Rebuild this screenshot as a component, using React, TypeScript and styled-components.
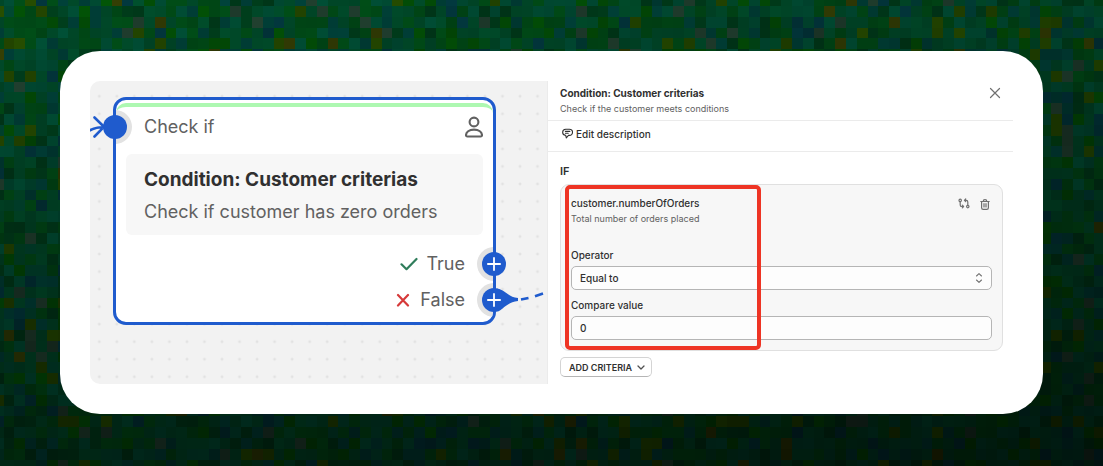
import React from "react";
import styled, { createGlobalStyle } from "styled-components";

const GlobalStyle = createGlobalStyle`
  *, *::before, *::after { box-sizing: border-box; }
  body { margin: 0; background: #02200f; }
  body, button, input, select { font-family: Inter, "Liberation Sans", sans-serif; }
  h2, h3, p { margin: 0; }
`;

const blue = "#1f5bcd";

/* ---------- mosaic backdrop ---------- */

const TILE = 10.8;
const COLS = 104;
const ROWS = 44;

const palette: Array<[number, number, number, number]> = [
  [0, 72, 40, 24],
  [0, 72, 22, 20],
  [0, 74, 50, 14],
  [0, 62, 54, 10],
  [0, 58, 26, 10],
  [2, 76, 6, 9],
  [36, 72, 0, 6],
  [50, 60, 4, 2],
  [32, 62, 46, 4],
  [2, 54, 60, 4],
];

function makeRandom(seed: number) {
  let s = seed;
  return () => {
    s = (s * 1664525 + 1013904223) % 4294967296;
    return s / 4294967296;
  };
}

function buildTiles() {
  const random = makeRandom(2291);
  const total = palette.reduce((sum, p) => sum + p[3], 0);
  const tiles: Array<{ x: number; y: number; fill: string }> = [];
  for (let row = 0; row < ROWS; row++) {
    for (let col = 0; col < COLS; col++) {
      let pick = random() * total;
      let tone = palette[0];
      for (const p of palette) {
        pick -= p[3];
        if (pick <= 0) {
          tone = p;
          break;
        }
      }
      const fade = 1.06 - 0.56 * (row / ROWS) - 0.2 * (col / COLS);
      const light = fade * (0.92 + random() * 0.16);
      const [r, g, b] = [tone[0], tone[1], tone[2]].map((c) => Math.round(c * light));
      tiles.push({
        x: col * TILE - 7.3,
        y: row * TILE - 4.8,
        fill: `rgb(${r},${g},${b})`,
      });
    }
  }
  return tiles;
}

const tiles = buildTiles();

const Page = styled.main`
  position: relative;
  min-height: 100vh;
  padding: 51px 60px 52px;
  overflow: hidden;
`;

const Backdrop = styled.svg`
  position: absolute;
  inset: 0;
  width: 100%;
  height: 100%;
`;

const Card = styled.section`
  position: relative;
  display: grid;
  grid-template-columns: 457fr 466fr;
  padding: 30px;
  border-radius: 40px;
  background: #fff;
`;

/* ---------- workflow canvas ---------- */

const Canvas = styled.div`
  position: relative;
  padding: 16px 51px 59px 23px;
  overflow: hidden;
  border-radius: 10px 0 0 10px;
  background: #f2f2f2;
`;

const Dots = styled.svg`
  position: absolute;
  inset: 0;
  width: 100%;
  height: 100%;
`;

const Node = styled.article`
  position: relative;
  display: flex;
  flex-direction: column;
  height: 100%;
  padding: 0 10px;
  border: 3px solid ${blue};
  border-radius: 13px;
  background: #fff;
`;

const NodeInside = styled.div`
  position: absolute;
  inset: 0;
  overflow: hidden;
  border-radius: 10px;
`;

const Accent = styled.div`
  position: absolute;
  inset: 3px 0 auto;
  height: 20px;
  border-top: 4px solid #adf8b1;
  border-radius: 10px 10px 0 0;
`;

const Halo = styled.span<{ $side: "left" | "right"; $top: number }>`
  position: absolute;
  top: ${(p) => p.$top - 17}px;
  ${(p) => p.$side}: -18px;
  width: 34px;
  height: 34px;
  border-radius: 50%;
  background: #e2e2e2;
`;

const PortButton = styled.button<{ $side: "left" | "right"; $top: number }>`
  position: absolute;
  top: ${(p) => p.$top - 12}px;
  ${(p) => p.$side}: -13px;
  display: grid;
  place-items: center;
  width: 24px;
  height: 24px;
  padding: 0;
  border: 0;
  border-radius: 50%;
  background: ${blue};
`;

const Incoming = styled.svg`
  position: absolute;
  top: 16px;
  right: 100%;
  width: 24px;
  height: 24px;
  overflow: visible;
`;

const Outgoing = styled.svg`
  position: absolute;
  top: 182px;
  left: 100%;
  width: 56px;
  height: 32px;
`;

const NodeHeader = styled.header`
  position: relative;
  display: flex;
  align-items: center;
  justify-content: space-between;
  height: 54px;
  padding: 0 0 0 18px;
  color: #616161;
  font-size: 18px;
  line-height: 24px;
`;

const NodeBody = styled.div`
  position: relative;
  padding: 14px 18px 11px;
  border-radius: 6px;
  background: #f7f7f7;
  color: #616161;
  font-size: 18px;
  line-height: 24px;
`;

const NodeTitle = styled.h2`
  margin-bottom: 8px;
  color: #303030;
  font-size: 19px;
  font-weight: 700;
  line-height: 24px;
`;

const Branches = styled.div`
  position: relative;
  display: flex;
  flex-direction: column;
  align-items: flex-end;
  gap: 12px;
  padding: 17px 18px 10px;
`;

const Branch = styled.div`
  display: flex;
  align-items: center;
  gap: 8px;
  color: #616161;
  font-size: 18px;
  line-height: 24px;
`;

/* ---------- settings panel ---------- */

const Panel = styled.div`
  display: flex;
  flex-direction: column;
  border-left: 1px solid #ebebeb;
  color: #303030;
  font-size: 10px;
  line-height: 14px;
`;

const PanelHeader = styled.header`
  display: flex;
  justify-content: space-between;
  align-items: flex-start;
  height: 40px;
  padding: 5px 11px 0 12px;
  border-bottom: 1px solid #ebebeb;
`;

const PanelTitle = styled.h2`
  margin-bottom: 2px;
  font-size: 10px;
  font-weight: 700;
  line-height: 14px;
`;

const Hint = styled.p`
  color: #616161;
  font-size: 9px;
  line-height: 14px;
`;

const IconButton = styled.button`
  display: grid;
  place-items: center;
  padding: 0;
  border: 0;
  background: none;
  color: #707070;
`;

const EditRow = styled.div`
  display: flex;
  height: 31px;
  padding: 0 14px 5px;
  border-bottom: 1px solid #ebebeb;
`;

const EditButton = styled.button`
  display: flex;
  align-items: center;
  gap: 3px;
  padding: 0;
  border: 0;
  background: none;
  color: #303030;
  font-size: 10px;
  font-weight: 450;
`;

const Criteria = styled.form`
  padding: 12px 10px 7px 12px;
`;

const GroupLabel = styled.h3`
  margin-bottom: 6px;
  font-size: 11px;
  font-weight: 600;
  line-height: 14px;
`;

const CriteriaBox = styled.div`
  position: relative;
  padding: 11px 10px 10px;
  margin-bottom: 6px;
  border: 1px solid #e0e0e0;
  border-radius: 9px;
  background: #f7f7f7;
`;

const Highlight = styled.div`
  position: absolute;
  top: 0;
  left: 4px;
  width: 196px;
  height: 100%;
  border: 4px solid #ee3424;
  border-radius: 5px;
  pointer-events: none;
`;

const BoxHeader = styled.div`
  display: flex;
  justify-content: space-between;
  align-items: flex-start;
  height: 52px;
`;

const Variable = styled.h3`
  margin-bottom: 2px;
  font-size: 10px;
  font-weight: 450;
  line-height: 14px;
`;

const Actions = styled.div`
  display: flex;
  gap: 9px;
  padding: 1px 1px 0 0;
`;

const Field = styled.div`
  position: relative;
  display: flex;
  flex-direction: column;
  gap: 4px;
  & + & { margin-top: 8px; }
`;

const Label = styled.label`
  font-weight: 450;
  line-height: 14px;
`;

const controlStyle = `
  width: 100%;
  height: 24px;
  padding: 0 8px;
  border: 1px solid #b5b5b5;
  border-radius: 5px;
  background: #fdfdfd;
  color: #303030;
  font-size: 10px;
  font-weight: 450;
  appearance: none;
`;

const Select = styled.select`${controlStyle}`;
const Input = styled.input`${controlStyle}`;

const SelectIcon = styled.svg`
  position: absolute;
  right: 9px;
  bottom: 6px;
  width: 8px;
  height: 12px;
  pointer-events: none;
`;

const AddButton = styled.button`
  display: flex;
  align-items: center;
  gap: 5px;
  height: 20px;
  padding: 0 6px 0 8px;
  border: 1px solid #d4d4d4;
  border-bottom-color: #b5b5b5;
  border-radius: 5px;
  background: #fff;
  color: #303030;
  font-size: 9px;
  font-weight: 600;
`;

const Plus = () => (
  <svg width="14" height="14" viewBox="0 0 14 14" fill="none" stroke="#fff" strokeWidth="1.8" strokeLinecap="round" aria-hidden="true">
    <path d="M7 .9v12.2M.9 7h12.2" />
  </svg>
);

export default function App() {
  return (
    <>
      <GlobalStyle />
      <Page>
        <Backdrop viewBox="0 0 1103 466" preserveAspectRatio="xMidYMid slice" shapeRendering="crispEdges" aria-hidden="true">
          {tiles.map((t, i) => (
            <rect key={i} x={t.x} y={t.y} width={TILE} height={TILE} fill={t.fill} />
          ))}
        </Backdrop>

        <Card>
          <Canvas>
            <Dots aria-hidden="true">
              <defs>
                <pattern id="dots" width="17.53" height="17.53" patternUnits="userSpaceOnUse" x="0.5" y="6.5">
                  <path d="M7.3 8.8h3M8.8 7.3v3" stroke="#dedede" strokeWidth="1" />
                </pattern>
              </defs>
              <rect width="100%" height="100%" fill="url(#dots)" />
            </Dots>

            <Node>
              <NodeInside aria-hidden="true">
                <Accent />
                <Halo $side="left" $top={27} />
                <Halo $side="right" $top={164} />
                <Halo $side="right" $top={200} />
              </NodeInside>

              <NodeHeader>
                Check if
                <svg width="18" height="22" viewBox="0 0 18 22" fill="none" stroke="#616161" strokeWidth="2.1" strokeLinejoin="round" aria-label="Customer" role="img">
                  <circle cx="9" cy="6" r="4.4" />
                  <path d="M1 19.2C1 16.2 4 13.6 9 13.6s8 2.6 8 5.6c0 .9-.5 1.3-1.3 1.3H2.3C1.5 20.5 1 20.1 1 19.2z" />
                </svg>
              </NodeHeader>

              <NodeBody>
                <NodeTitle>Condition: Customer criterias</NodeTitle>
                <p>Check if customer has zero orders</p>
              </NodeBody>

              <Branches>
                <Branch>
                  <svg width="18" height="14" viewBox="0 0 18 14" fill="none" stroke="#2f7d5b" strokeWidth="2.2" strokeLinecap="round" strokeLinejoin="round" aria-hidden="true">
                    <path d="M1.5 7.3l5 4.9L16.5 2" />
                  </svg>
                  True
                </Branch>
                <Branch>
                  <svg width="16" height="14" viewBox="0 0 16 14" fill="none" stroke="#d63a3a" strokeWidth="2.2" strokeLinecap="round" aria-hidden="true">
                    <path d="M2 2l10 10.5M12 2L2 12.5" />
                  </svg>
                  False
                </Branch>
              </Branches>

              <Incoming viewBox="0 0 24 24" fill="none" stroke={blue} strokeWidth="2.6" strokeLinecap="round" aria-hidden="true">
                <path d="M-4 15.5C1 12 6 11 14 11M2.5 1.5L12 10.8 2.5 20.5" />
              </Incoming>
              <Outgoing viewBox="0 0 56 32" aria-hidden="true">
                <path d="M4 6.5C13 8 15 15.5 25 16v3C15 20 12 26 4 29z" fill={blue} />
                <path d="M28 17.5L35.5 16M42 14.2L50 11.5" fill="none" stroke={blue} strokeWidth="2.6" />
              </Outgoing>

              <PortButton $side="left" $top={27} type="button" aria-label="Incoming connection" />
              <PortButton $side="right" $top={164} type="button" aria-label="Add step when true"><Plus /></PortButton>
              <PortButton $side="right" $top={200} type="button" aria-label="Add step when false"><Plus /></PortButton>
            </Node>
          </Canvas>

          <Panel>
            <PanelHeader>
              <div>
                <PanelTitle>Condition: Customer criterias</PanelTitle>
                <Hint>Check if the customer meets conditions</Hint>
              </div>
              <IconButton type="button" aria-label="Close">
                <svg width="14" height="14" viewBox="0 0 14 14" fill="none" stroke="currentColor" strokeWidth="1.2" strokeLinecap="round">
                  <path d="M2.5 2.5l9 9M11.5 2.5l-9 9" />
                </svg>
              </IconButton>
            </PanelHeader>

            <EditRow>
              <EditButton type="button">
                <svg width="11" height="11" viewBox="0 0 11 11" fill="none" stroke="#303030" strokeWidth="1.1" strokeLinecap="round" strokeLinejoin="round" aria-hidden="true">
                  <path d="M3.8 1.2h3.6a2.9 2.9 0 0 1 0 6.2H6.5L4.3 9.8 3.7 7.4a3 3 0 0 1 .1-6.2zM3.4 3.4h4.4M3.4 5.3h2.8" />
                </svg>
                Edit description
              </EditButton>
            </EditRow>

            <Criteria onSubmit={(e) => e.preventDefault()}>
              <GroupLabel>IF</GroupLabel>
              <CriteriaBox>
                <BoxHeader>
                  <div>
                    <Variable>customer.numberOfOrders</Variable>
                    <Hint>Total number of orders placed</Hint>
                  </div>
                  <Actions>
                    <IconButton type="button" aria-label="Replace variable">
                      <svg width="12" height="12" viewBox="0 0 12 12" fill="none" stroke="currentColor" strokeWidth="1.2" strokeLinecap="round" strokeLinejoin="round">
                        <circle cx="2.2" cy="2.4" r="1.2" />
                        <circle cx="9.8" cy="8.6" r="1.2" />
                        <path d="M2.2 3.7v3.2c0 1 .6 1.6 1.6 1.6h1.5M4.3 7.2l1.3 1.3-1.3 1.4M9.8 7.3V4c0-1-.6-1.6-1.6-1.6H6.6M7.7 1L6.4 2.4l1.3 1.3" />
                      </svg>
                    </IconButton>
                    <IconButton type="button" aria-label="Delete criteria">
                      <svg width="12" height="14" viewBox="0 0 12 14" fill="none" stroke="currentColor" strokeWidth="1.2" strokeLinecap="round" strokeLinejoin="round">
                        <path d="M1.8 4.5h8.400M4.200 4.500c0-2.400 3.600-2.400 3.600 0M2.600 4.500v6.300c0 1 .6 1.600 1.600 1.600h3.600c1 0 1.600-.6 1.600-1.600V4.500M5 6.700v3.300M7 6.700v3.300" />
                      </svg>
                    </IconButton>
                  </Actions>
                </BoxHeader>

                <Field>
                  <Label htmlFor="operator">Operator</Label>
                  <Select id="operator" defaultValue="eq">
                    <option value="eq">Equal to</option>
                    <option value="ne">Not equal to</option>
                  </Select>
                  <SelectIcon viewBox="0 0 8 12" fill="none" stroke="#707070" strokeWidth="1.1" strokeLinecap="round" strokeLinejoin="round" aria-hidden="true">
                    <path d="M1.5 4L4 1.7 6.5 4M1.5 8L4 10.3 6.5 8" />
                  </SelectIcon>
                </Field>
                <Field>
                  <Label htmlFor="compare">Compare value</Label>
                  <Input id="compare" type="text" defaultValue="0" />
                </Field>
                <Highlight />
              </CriteriaBox>
              <AddButton type="button">
                ADD CRITERIA
                <svg width="8" height="8" viewBox="0 0 8 8" fill="none" stroke="#505050" strokeWidth="1.3" strokeLinecap="round" strokeLinejoin="round" aria-hidden="true">
                  <path d="M1 3l3 3 3-3" />
                </svg>
              </AddButton>
            </Criteria>
          </Panel>
        </Card>
      </Page>
    </>
  );
}
